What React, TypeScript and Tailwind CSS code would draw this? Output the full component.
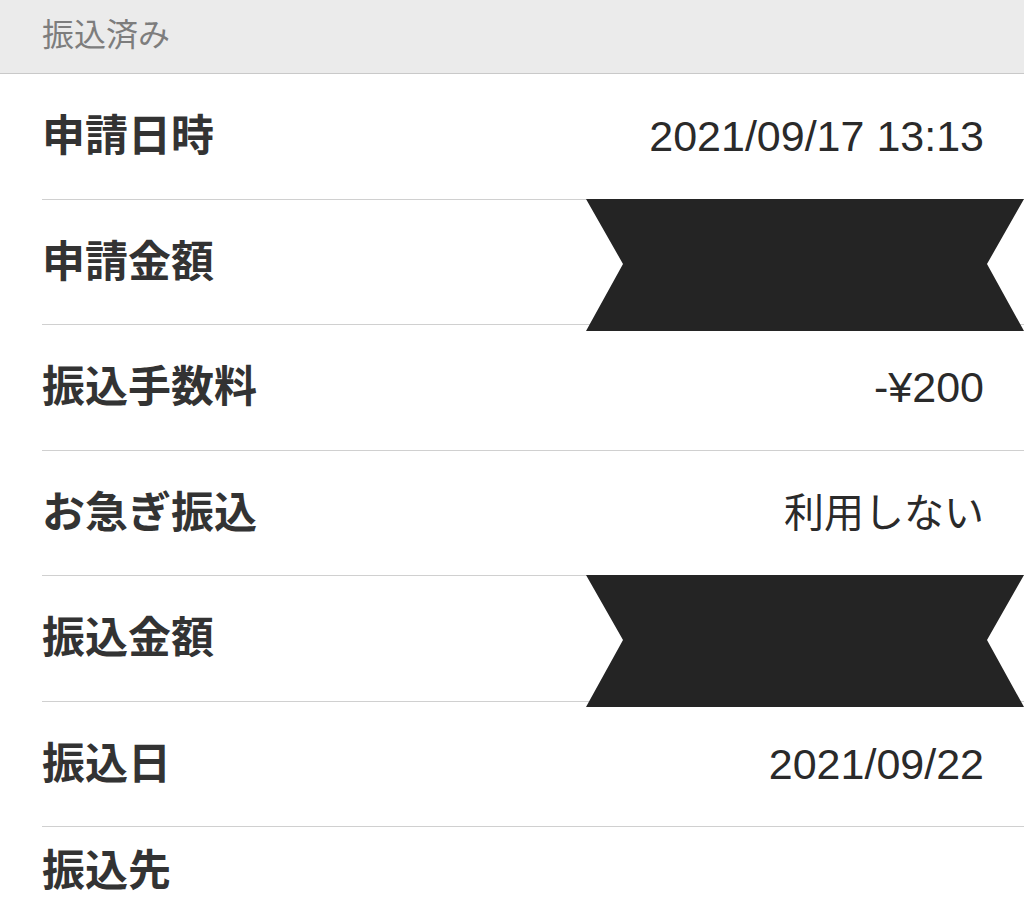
const rows: { label: string; value?: string; cjk?: boolean; redacted?: boolean }[] = [
  { label: "申請日時", value: "2021/09/17 13:13" },
  { label: "申請金額", redacted: true },
  { label: "振込手数料", value: "-¥200" },
  { label: "お急ぎ振込", value: "利用しない", cjk: true },
  { label: "振込金額", redacted: true },
  { label: "振込日", value: "2021/09/22" },
];

function Redaction() {
  return (
    <svg
      className="absolute left-[544px] top-[-1px] h-[132px] w-[438px]"
      viewBox="0 0 438 132"
      preserveAspectRatio="none"
    >
      <polygon points="0,0 438,0 401,65 438,132 0,132 37,65" fill="#242424" />
    </svg>
  );
}

export default function App() {
  return (
    <div
      className="h-[906px] w-[1024px] overflow-hidden bg-white text-[#333333]"
      style={{ fontFamily: '"Liberation Sans", "Noto Sans CJK JP", sans-serif' }}
    >
      <div className="flex h-[74px] items-center border-b border-[#c9c9c9] bg-[#ebebeb] pl-[42px] pb-[3px]">
        <span className="text-[32px] text-[#7d7d7d]">振込済み</span>
      </div>

      <div className="pl-[42px]">
        {rows.map((row) => (
          <div
            key={row.label}
            className="relative flex h-[125.5px] items-center justify-between border-b border-[#d0d0d0] pr-[40px]"
          >
            <span className="text-[43px] font-bold">{row.label}</span>
            {row.value && (
              <span className={row.cjk ? "text-[40px] text-[#2a2a2a]" : "text-[43px] text-[#2a2a2a]"}>
                {row.value}
              </span>
            )}
            {row.redacted && <Redaction />}
          </div>
        ))}
        <div className="flex pt-[13px]">
          <span className="text-[43px] leading-[63px] font-bold">振込先</span>
        </div>
      </div>
    </div>
  );
}
